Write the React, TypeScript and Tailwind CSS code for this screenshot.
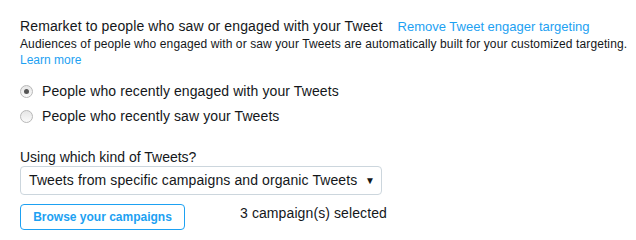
import React from "react";

function Radio({ checked }: { checked?: boolean }) {
  return (
    <span className="flex h-[13px] w-[13px] shrink-0 items-center justify-center rounded-full border border-[#b8b8b8] bg-gradient-to-b from-[#e6e6e6] to-[#fafafa]">
      {checked && <span className="h-[5px] w-[5px] rounded-full bg-[#555]" />}
    </span>
  );
}

export default function App() {
  return (
    <div className="h-[240px] w-[636px] bg-white pl-[20px] pt-[17px] text-[#14171a]" style={{ fontFamily: '"Liberation Sans", Arial, sans-serif' }}>
      <div className="flex items-baseline whitespace-nowrap text-[14px] leading-[18px] tracking-[0.12px]">
        <span>Remarket to people who saw or engaged with your Tweet</span>
        <a className="ml-[15px] text-[13px] tracking-[0px] text-[#1da1f2]">Remove Tweet engager targeting</a>
      </div>
      <div className="whitespace-nowrap text-[12px] leading-[16px] tracking-[0.1px]">
        Audiences of people who engaged with or saw your Tweets are automatically built for your customized targeting.
      </div>
      <div className="text-[12px] leading-[16px] text-[#1da1f2]">Learn more</div>
      <div className="mt-[14px] flex flex-col gap-[7px] text-[14px] leading-[18px] tracking-[0.1px]">
        <label className="flex items-center gap-[9px]">
          <Radio checked />
          <span>People who recently engaged with your Tweets</span>
        </label>
        <label className="flex items-center gap-[9px]">
          <Radio />
          <span>People who recently saw your Tweets</span>
        </label>
      </div>
      <div className="mt-[24px] text-[14px] leading-[16px]">Using which kind of Tweets?</div>
      <div className="mt-[1px] flex h-[29px] w-[362px] items-center justify-between rounded-[4px] border border-[#ccd6dd] pl-[8px] pr-[6px] text-[14px] tracking-[0.1px]">
        <span>Tweets from specific campaigns and organic Tweets</span>
        <span className="text-[10px]">▼</span>
      </div>
      <div className="mt-[8px] flex items-center">
        <button className="h-[26px] w-[165px] rounded-[4px] border border-[#1da1f2] text-[12px] font-bold text-[#1da1f2]">
          Browse your campaigns
        </button>
        <span className="mb-[6px] ml-[55px] text-[14px] tracking-[0.1px]">3 campaign(s) selected</span>
      </div>
    </div>
  );
}
